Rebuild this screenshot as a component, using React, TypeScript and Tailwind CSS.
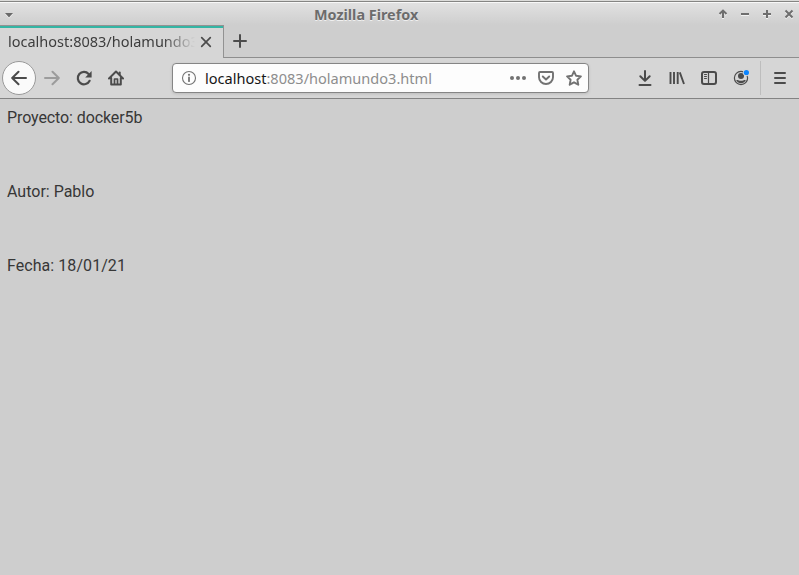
import type { ReactNode } from "react";

const Icon = ({ children, className = "" }: { children: ReactNode; className?: string }) => (
  <svg
    width="16"
    height="16"
    viewBox="0 0 16 16"
    fill="none"
    stroke="currentColor"
    strokeWidth="2"
    strokeLinecap="round"
    strokeLinejoin="round"
    className={`shrink-0 ${className}`}
  >
    {children}
  </svg>
);

const WindowButton = ({ d }: { d: string }) => (
  <svg width="10" height="10" viewBox="0 0 10 10" fill="none" strokeWidth="2" className="shrink-0 overflow-visible">
    <path d={d} stroke="#f2f2f2" transform="translate(0 1)" />
    <path d={d} stroke="#6e6e6e" />
  </svg>
);

function TitleBar() {
  return (
    <header className="flex h-[25px] shrink-0 flex-col">
      <div className="h-px bg-[#dcdcda]" />
      <div className="h-px bg-[#858583]" />
      <div className="h-px bg-[#f8f8f8]" />
      <div className="flex flex-1 items-center bg-linear-to-b from-[#e1e1e1] to-[#cecece] pr-[5px] pl-[5px]">
        <svg width="8" height="5" viewBox="0 0 8 5" className="mt-[2px] overflow-visible">
          <path d="M0 1h8L4 5.4z" fill="#f2f2f2" />
          <path d="M0 0h8L4 4.5z" fill="#6a6a6a" />
        </svg>
        <h1 className="ml-[301px] w-[110px] pt-[2px] text-[14.4px] leading-5 font-bold whitespace-nowrap text-[#6c6c6c] [text-shadow:0_1px_0_#efefef]">
          Mozilla Firefox
        </h1>
        <div className="ml-auto flex gap-3">
          <WindowButton d="M5 9V2M1.5 5L5 1.6 8.5 5" />
          <WindowButton d="M1 5h8" />
          <WindowButton d="M1 5h8M5 1v8" />
          <WindowButton d="M1.5 1.5l7 7M8.5 1.5l-7 7" />
        </div>
      </div>
    </header>
  );
}

function TabStrip() {
  return (
    <div className="flex h-[33px] shrink-0 bg-[#cecece]">
      <div className="flex w-[224px] flex-col border-t border-r border-[#929292] bg-[#d6d6d6]">
        <div className="h-[2px] shrink-0 bg-[#34b5a4]" />
        <div className="flex flex-1 items-start pl-2">
          <span className="w-[187px] text-[14.5px] leading-[26px] whitespace-nowrap text-[#3d3d3d] [mask-image:linear-gradient(to_right,black_155px,transparent_187px)]">
            localhost:8083/holamundo3
          </span>
          <svg width="12" height="12" viewBox="0 0 12 12" className="mt-2 ml-[5px] shrink-0" fill="none" stroke="#4c4c4c" strokeWidth="1.7" strokeLinecap="round">
            <path d="M1.7 1.7l8.6 8.6M10.3 1.7l-8.6 8.6" />
          </svg>
        </div>
      </div>
      <div className="flex flex-1 items-center border-b border-[#8e8e8e] pl-[9px]">
        <svg width="14" height="14" viewBox="0 0 14 14" stroke="#4c4c4c" strokeWidth="2" strokeLinecap="round">
          <path d="M1 7h12M7 1v12" />
        </svg>
      </div>
    </div>
  );
}

function AddressBar() {
  return (
    <div className="ml-12 flex h-[30px] w-[417px] items-center rounded-[4px] border border-[#858585] bg-[#fdfdfd] pr-[6px] pl-[8px] shadow-[0_1px_3px_rgba(0,0,0,0.12)]">
      <Icon className="text-[#737373]">
        <circle cx="8" cy="8" r="6.5" strokeWidth="1.1" />
        <path d="M8 7.5v3.7" strokeWidth="1.8" />
        <circle cx="8" cy="4.8" r="1.1" fill="currentColor" stroke="none" />
      </Icon>
      <span className="ml-[8px] text-[14.55px] leading-5 whitespace-nowrap text-[#8d8d8d]">
        <span className="text-[#161616]">localhost</span>:8083/holamundo3.html
      </span>
      <div className="ml-auto flex items-center gap-3 text-[#727272]">
        <Icon>
          <g fill="currentColor" stroke="none">
            <circle cx="2" cy="8" r="2" />
            <circle cx="8" cy="8" r="2" />
            <circle cx="14" cy="8" r="2" />
          </g>
        </Icon>
        <Icon>
          <path d="M2 2h12a1 1 0 0 1 1 1v4.2a7 6.8 0 0 1-14 0V3a1 1 0 0 1 1-1z" strokeWidth="1.9" />
          <path d="M4.8 6.5L8 9.5l3.2-3" strokeWidth="1.9" />
        </Icon>
        <Icon>
          <path d="M8 1.3l2.1 4.5 4.8.6-3.5 3.4.9 4.9L8 12.3l-4.3 2.4.9-4.9L1.1 6.4l4.8-.6z" strokeWidth="1.9" />
        </Icon>
      </div>
    </div>
  );
}

function Toolbar() {
  return (
    <nav className="flex h-[41px] shrink-0 items-center border-b border-[#838383] bg-[#d6d6d6] pl-[2px] text-[#4b4b4b]">
      <div className="flex size-[34px] shrink-0 items-center justify-center rounded-full border border-[#999] bg-[#fafafa]">
        <Icon>
          <path d="M15 8H1.5M7.5 1.7L1.2 8l6.3 6.3" />
        </Icon>
      </div>
      <Icon className="ml-2 text-[#9c9c9c]">
        <path d="M1 8h13.5M8.5 1.7L14.8 8l-6.3 6.3" />
      </Icon>
      <Icon className="ml-4">
        <path d="M13.6 10.8A6.2 6.2 0 1 1 12.6 3.9" strokeWidth="2.2" />
        <path d="M15.6 1v6.4H9.2z" fill="currentColor" stroke="none" />
      </Icon>
      <Icon className="ml-4">
        <path d="M1 8.5L8 1.5l7 7M3.2 8v6.5h9.6V8" />
        <path d="M11.7 2.5v2" />
        <path d="M6.5 14V9h3v5" strokeWidth="1.7" />
      </Icon>
      <AddressBar />
      <div className="ml-12 flex items-center gap-4">
        <Icon>
          <path d="M8 1v9.5M3.3 6.2L8 10.9l4.7-4.7M2.5 15h11" />
        </Icon>
        <Icon>
          <path d="M1.5 2v12M5 2v12M8.7 2v12M10.8 2.4L15 14" strokeLinecap="butt" strokeWidth="1.9" />
        </Icon>
        <Icon>
          <rect x="1" y="2" width="14" height="12" rx="2" />
          <path d="M7.5 2v12" strokeWidth="1.2" />
          <path d="M3.5 4.5h2M3.5 6.5h2M3.5 8.5h2" strokeWidth="1" />
        </Icon>
        <Icon className="overflow-visible">
          <circle cx="8" cy="8" r="6.6" strokeWidth="1.2" />
          <circle cx="8" cy="6" r="3" fill="currentColor" stroke="none" />
          <path d="M3.2 10.3c1.5-.8 2.3.5 4.8.5s3.3-1.3 4.8-.5c-1 2-2.7 2.9-4.8 2.9s-3.8-.9-4.8-2.9z" fill="currentColor" stroke="none" />
          <circle cx="13.4" cy="2.5" r="3.4" fill="#d6d6d6" stroke="none" />
          <circle cx="13.4" cy="2.5" r="2.6" fill="#0a84ff" stroke="none" />
        </Icon>
      </div>
      <div className="ml-[11px] h-[34px] w-px bg-[#bdbdbd]" />
      <Icon className="ml-[11px]">
        <path d="M3 3h10M3 8h10M3 13h10" />
      </Icon>
    </nav>
  );
}

export default function App() {
  return (
    <div className="flex h-[575px] w-[799px] flex-col overflow-hidden bg-[#cecece] font-['Noto_Sans',sans-serif]">
      <TitleBar />
      <TabStrip />
      <Toolbar />
      <main className="flex flex-col gap-[55px] pt-[9px] pl-[7px] font-['Roboto',sans-serif] text-[16px] leading-[19px] text-[#373737]">
        <p className="tracking-[-0.1px]">Proyecto: docker5b</p>
        <p>Autor: Pablo</p>
        <p className="tracking-[0.06px]">Fecha: 18/01/21</p>
      </main>
    </div>
  );
}
